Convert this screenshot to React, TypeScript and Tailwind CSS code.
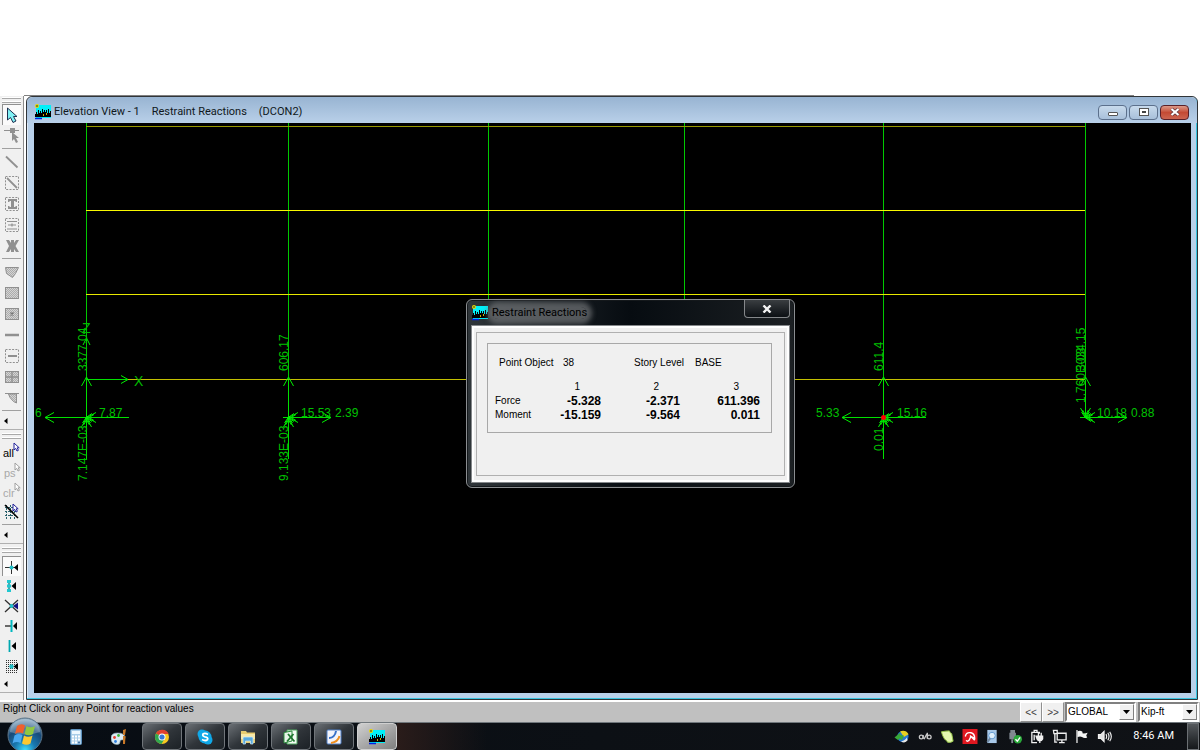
import type { ReactNode } from 'react';

const uiFont = "font-['Liberation_Sans',Arial,sans-serif]";
const titleFont = "font-['Roboto','Open_Sans',sans-serif]";

function AppIcon({ className }: { className: string }) {
  return (
    <svg viewBox="0 0 16 16" className={className} aria-hidden="true">
      <rect x="1" y="1" width="15" height="13" fill="#00f0f8" />
      <path d="M0 13V10h1V8h1v2h1V6h1v3h1V7h1v2h1V5h1v3h1V6h1v2h1V6h1v3h1V5h1v4h1V7h1v6z" fill="#000" />
      <path d="M8 10h1v2H8zM11 9h1v2h-1z" fill="#c8b400" />
      <circle cx="2" cy="2" r="2" fill="#e8d800" />
      <circle cx="2" cy="2" r="1" fill="#6a6a30" />
      <path d="M0 14.500h7" stroke="#0020e0" strokeWidth="1.500" />
    </svg>
  );
}

/* ---------- left toolbars ---------- */

type Tool = { name: string; icon: ReactNode; pressed?: boolean };

const gray = '#909090';
const cursor = 'M0 0v7l1.700-1.600L3 8l1.400-.7L3.200 4.800H5.200z';

const drawTools: (Tool | null)[] = [
  {
    name: 'Pointer',
    pressed: true,
    icon: <path d="M3.500 1v12l3-2.500 2.500 5 3-1.500-2.500-4.500H13z" fill="#7ff0f4" stroke="#203050" strokeWidth="1" />,
  },
  {
    name: 'Reshape object',
    icon: (
      <g fill={gray}>
        <path d="M0 2h15v1H0z" />
        <path d="M6 0h5v5H6z" />
        <path d="M8 4v9l2-2 2 4 2-1-2-4h3z" />
      </g>
    ),
  },
  null,
  { name: 'Draw line', icon: <path d="M2 2.500l11.500 11" stroke={gray} strokeWidth="1.800" /> },
  {
    name: 'Draw line in region',
    icon: (
      <g stroke={gray} fill="none">
        <rect x="1.500" y="1.500" width="13" height="13" strokeDasharray="2 1.300" />
        <path d="M3 3l10 10" strokeWidth="1.800" />
      </g>
    ),
  },
  {
    name: 'Create columns',
    icon: (
      <g>
        <rect x="1.500" y="1.500" width="13" height="13" stroke={gray} fill="none" strokeDasharray="2 1.300" />
        <path d="M4 3h9v3h-1l-1-1h-1v6h1l1-1h1v3H4v-3h1l1 1h1V5H6L5 6H4z" fill={gray} />
      </g>
    ),
  },
  {
    name: 'Create secondary beams',
    icon: (
      <g stroke={gray} fill="none">
        <rect x="1.500" y="1.500" width="13" height="13" strokeDasharray="2 1.300" />
        <path d="M3 4.500h10M4 8h8M3 12h10M8 6.500v3" strokeWidth="1.200" />
      </g>
    ),
  },
  {
    name: 'Create braces',
    icon: (
      <path d="M2 2h3l2 3V2h3v3l2-3h3l-3.500 6 3.500 6h-3l-2-3v3H7v-3l-2 3H2l3-6z" fill={gray} />
    ),
  },
  null,
  { name: 'Draw area', icon: <path d="M1.500 3.500h13l-3 6-3 4-6-4z" fill="url(#dots)" stroke={gray} /> },
  { name: 'Draw rectangular area', icon: <rect x="1.500" y="2.500" width="13" height="11" fill="url(#dots)" stroke={gray} /> },
  {
    name: 'Create area at click',
    icon: (
      <g>
        <rect x="1.500" y="2.500" width="13" height="11" fill="url(#dots)" stroke={gray} />
        <path d="M6.500 6.500l3 3M9.500 6.500l-3 3" stroke="#777" strokeWidth="1.400" />
      </g>
    ),
  },
  { name: 'Draw wall', icon: <path d="M1 8h14" stroke={gray} strokeWidth="2.500" /> },
  {
    name: 'Create wall in region',
    icon: (
      <g stroke={gray} fill="none">
        <rect x="1.500" y="1.500" width="13" height="13" strokeDasharray="2 1.300" />
        <path d="M4 8h9" strokeWidth="2" />
      </g>
    ),
  },
  {
    name: 'Draw window',
    icon: (
      <g stroke={gray}>
        <rect x="1.500" y="2.500" width="13" height="11" fill="url(#dots)" />
        <path d="M8 2v12M1 8h14" strokeWidth="1.400" />
      </g>
    ),
  },
  {
    name: 'Draw door',
    icon: (
      <g stroke={gray} fill="url(#dots)">
        <path d="M1 3.500h14" />
        <path d="M4.500 4h8v9l-3-1.500-3.500-4z" />
      </g>
    ),
  },
];

const selectTools: Tool[] = [
  {
    name: 'Select all',
    icon: (
      <g>
        <text x="-1" y="13" fontSize="11" fill="#000">all</text>
        <path transform="translate(10 -1)" d={cursor} fill="#fff" stroke="#20209a" />
      </g>
    ),
  },
  {
    name: 'Restore previous selection',
    icon: (
      <g>
        <text x="0" y="13" fontSize="11" fill="#a8a8a8">ps</text>
        <path transform="translate(11 -1)" d={cursor} fill="#fff" stroke="#a0a0a0" />
      </g>
    ),
  },
  {
    name: 'Clear selection',
    icon: (
      <g>
        <text x="-1" y="13" fontSize="11" fill="#a8a8a8">clr</text>
        <path transform="translate(11 -1)" d={cursor} fill="#fff" stroke="#a0a0a0" />
      </g>
    ),
  },
  {
    name: 'Select by intersecting line',
    icon: (
      <g>
        <path d="M2.500 1v14M6.500 1v14M10.500 1v14M1 3.500h12M1 7.500h12M1 11.500h12" stroke="#28606c" strokeDasharray="2 1" />
        <path d="M1 1l13 13" stroke="#000" strokeWidth="1.600" />
        <path transform="translate(9 0)" d={cursor} fill="#fff" stroke="#20209a" />
      </g>
    ),
  },
];

const snapTools: Tool[] = [
  {
    name: 'Snap to points',
    pressed: true,
    icon: (
      <g>
        <path d="M1 8.500h13M7.500 2v13" stroke="#303030" />
        <circle cx="7.500" cy="8.500" r="2" fill="#20c0c8" />
        <path d="M10 8.500l4-3.500v7z" fill="#000" />
      </g>
    ),
  },
  {
    name: 'Snap to midpoints',
    icon: (
      <g>
        <path d="M5 2v12" stroke="#208890" strokeWidth="1.500" />
        <path d="M3 2h4v3H3zM3 6.500h4v3H3zM3 11h4v3H3z" fill="#20c8d0" />
        <path d="M7.500 8l4.500-4v8z" fill="#000" />
      </g>
    ),
  },
  {
    name: 'Snap to intersections',
    icon: (
      <g>
        <path d="M1 2l13 12M1 14L14 2" stroke="#303030" strokeWidth="1.300" />
        <circle cx="7.500" cy="8" r="2" fill="#20c0c8" />
        <path d="M9 8l5-3.500v7z" fill="#101080" />
      </g>
    ),
  },
  {
    name: 'Snap to perpendicular',
    icon: (
      <g>
        <path d="M1 8h7" stroke="#202020" strokeWidth="1.300" />
        <path d="M7.500 2v12" stroke="#00b8c0" strokeWidth="2" />
        <path d="M9 8l4-4v8z" fill="#000" />
      </g>
    ),
  },
  {
    name: 'Snap to lines and edges',
    icon: (
      <g>
        <path d="M5.500 2v12" stroke="#00a8b0" strokeWidth="1.800" />
        <path d="M7.500 8l4.500-4v8z" fill="#000" />
      </g>
    ),
  },
  {
    name: 'Snap to fine grid',
    icon: (
      <g>
        <rect x="1" y="2" width="13" height="13" fill="url(#grid)" />
        <circle cx="7.500" cy="8.500" r="2.200" fill="#20c0c8" />
        <path d="M9.500 8.500l4.500-3.500v7z" fill="#000" />
      </g>
    ),
  },
];

function Grip({ className }: { className: string }) {
  return (
    <div className={`flex flex-col justify-center gap-0.5 px-0.5 ${className}`}>
      <div className="h-0.5 border-b border-[#a8a8a8] bg-white" />
      <div className="h-0.5 border-b border-[#a8a8a8] bg-white" />
    </div>
  );
}

function ToolButton({ tool, tall }: { tool: Tool; tall?: boolean }) {
  return (
    <button
      type="button"
      aria-label={tool.name}
      className={`flex w-full items-center justify-center ${tall ? 'h-[21px]' : 'h-5'} ${
        tool.pressed ? 'border-l border-t border-[#909090] bg-[#fafafa]' : ''
      }`}
    >
      <svg viewBox="0 0 16 16" className={`h-4 w-4 shrink-0 overflow-visible ${uiFont}`}>
        {tool.icon}
      </svg>
    </button>
  );
}

function Divider() {
  return <div className="my-0.5 h-px shrink-0 bg-[#a0a0a0]" />;
}

function MoreArrow() {
  return (
    <button type="button" aria-label="More tools" className="flex h-4 items-center pl-0.5">
      <svg viewBox="0 0 4 6" className="h-1.5 w-1">
        <path d="M0 3l3.500-3v6z" fill="#000" />
      </svg>
    </button>
  );
}

function Toolbars() {
  return (
    <aside className="flex w-6 shrink-0 flex-col border-r border-[#8c8c8c] bg-[#f0f0f0]">
      <svg className="absolute h-0 w-0" aria-hidden="true">
        <defs>
          <pattern id="dots" width="2" height="2" patternUnits="userSpaceOnUse">
            <rect width="2" height="2" fill="#d4d4d4" />
            <path d="M0 0h1v1H0zM1 1h1v1H1z" fill="#acacac" />
          </pattern>
          <pattern id="grid" width="2" height="2" patternUnits="userSpaceOnUse">
            <path d="M0 0h1v1H0z" fill="#303030" />
          </pattern>
        </defs>
      </svg>
      <Grip className="h-2" />
      <div className="flex flex-col px-0.5">
        {drawTools.map((tool, i) => (tool ? <ToolButton key={i} tool={tool} tall /> : <Divider key={i} />))}
        <Divider />
        <MoreArrow />
      </div>
      <div className="h-px bg-[#b0b0b0]" />
      <Grip className="h-3" />
      <div className="flex flex-col px-0.5">
        {selectTools.map((tool) => (
          <ToolButton key={tool.name} tool={tool} />
        ))}
        <Divider />
        <MoreArrow />
      </div>
      <div className="h-px bg-[#b0b0b0]" />
      <Grip className="h-3" />
      <div className="flex flex-col px-0.5">
        {snapTools.map((tool) => (
          <ToolButton key={tool.name} tool={tool} />
        ))}
        <MoreArrow />
      </div>
      <div className="h-px bg-[#b0b0b0]" />
    </aside>
  );
}

/* ---------- elevation drawing ---------- */

function Head({ x, y, angle, double }: { x: number; y: number; angle: number; double?: boolean }) {
  return (
    <g transform={`translate(${x} ${y}) rotate(${angle})`}>
      <path d="M-9-5L0 0l-9 5" />
      {double && <path d="M-5-4L1 0l-6 4M-7-3l5 3-5 3" />}
    </g>
  );
}

const columns = [86, 288, 488, 684, 883, 1085];
const beams = [
  { y: 126, color: '#989800' },
  { y: 210, color: '#f8f800' },
  { y: 294, color: '#e8e800' },
  { y: 379, color: '#c4c000' },
];

const labels = [
  { text: '6', x: 35 },
  { text: '7.87', x: 99 },
  { text: '15.53', x: 301 },
  { text: '2.39', x: 335 },
  { text: '5.33', x: 816 },
  { text: '15.16', x: 897 },
  { text: '10.18', x: 1097 },
  { text: '0.88', x: 1131 },
];

const uprightLabels = [
  { text: '3377.04', x: 87, y: 371 },
  { text: '7.147E-03', x: 87, y: 481 },
  { text: '606.17', x: 288, y: 371 },
  { text: '9.133E-03', x: 288, y: 481 },
  { text: '611.4', x: 883, y: 371 },
  { text: '0.01', x: 883, y: 451 },
  { text: '3034.15', x: 1085, y: 371 },
  { text: '1.760E-03', x: 1085, y: 403 },
];

function Elevation() {
  return (
    <svg className={`block h-full w-full ${uiFont}`} role="img" aria-label="Frame elevation with restraint reactions">
      <g transform="translate(-34 -123)">
        {columns.map((x) => (
          <path key={x} d={`M${x}.500 123V379`} stroke="#00c800" />
        ))}
        {beams.map((b) => (
          <path key={b.y} d={`M86 ${b.y}.500H1085`} stroke={b.color} />
        ))}
        <g stroke="#00e000" fill="none">
          <path d="M86.500 379.500V459M288.500 379.500V459M883.500 379.500V459M1085.500 379.500V417" />
          <path d="M45 417.500H129M283 417.500H331M842 417.500H926M1080 417.500H1127M86 379.500H128" />
        </g>
        <g stroke="#00f000" fill="none">
          {[86.5, 288.5, 883.5, 1085.5].map((x) => (
            <Head key={x} x={x} y={377} angle={-90} />
          ))}
          {[86.5, 288.5, 883.5].map((x) => (
            <Head key={x} x={x} y={418} angle={-90} double />
          ))}
          <Head x={1085.5} y={417} angle={90} double />
          {[87, 289, 884, 1086].map((x) => (
            <Head key={x} x={x} y={417.5} angle={180} double />
          ))}
          <Head x={45} y={417.5} angle={180} />
          <Head x={842} y={417.5} angle={180} />
          <Head x={331} y={417.5} angle={0} />
          <Head x={1127} y={417.5} angle={0} />
          <path d="M121 375.500l7 4-7 4M83 345l3.500-7 3.500 7" />
        </g>
        <circle cx="883.500" cy="417.500" r="2.500" fill="#ff0000" />
        <g fill="#00c000" fontSize="12">
          {labels.map((l) => (
            <text key={l.text} x={l.x} y="417">
              {l.text}
            </text>
          ))}
          {uprightLabels.map((l) => (
            <text key={l.text} transform={`translate(${l.x} ${l.y}) rotate(-90)`}>
              {l.text}
            </text>
          ))}
        </g>
        <g fill="#00b800" fontSize="14">
          <text x="134" y="386">X</text>
          <text x="82" y="333">Z</text>
        </g>
      </g>
    </svg>
  );
}

const reactions = [
  { name: 'Force', values: ['-5.328', '-2.371', '611.396'] },
  { name: 'Moment', values: ['-15.159', '-9.564', '0.011'] },
];

function ReactionDialog() {
  return (
    <div
      role="dialog"
      aria-label="Restraint Reactions"
      className="absolute left-[432px] top-[176px] flex w-[329px] flex-col rounded-md border border-[#8a8d90] bg-gradient-to-r from-[#30363a] via-[#070c11] to-[#1c2023] px-1 pb-1 shadow-[inset_0_0_0_1px_#14181b]"
    >
      <div className="flex h-[25px] items-start justify-between">
        <div className={`flex h-full items-center gap-1 pl-px text-[11px] text-black ${titleFont}`}>
          <AppIcon className="h-4 w-4" />
          <h2 className="rounded-full bg-[#707376]/70 leading-3 shadow-[0_0_5px_5px_rgba(112,115,118,0.7)]">Restraint Reactions</h2>
        </div>
        <button
          type="button"
          aria-label="Close"
          className="flex h-[18px] w-[46px] items-center justify-center rounded-b border border-t-0 border-[#85888b] bg-gradient-to-b from-[#3a3e41] to-[#0c1014]"
        >
          <svg viewBox="0 0 10 8" className="h-2 w-2.5">
            <path d="M1.500.5l7 7M8.500.5l-7 7" stroke="#f4f4f4" strokeWidth="2.400" />
          </svg>
        </button>
      </div>
      <div className={`border border-[#85888b] bg-white text-[10px] leading-[14px] text-black ${uiFont}`}>
        <div className="border-2 border-white bg-[#f0f0f0] px-0.5 py-1">
          <div className="h-36 border border-[#b0b0b0] pl-[10px] pr-3 pt-[10px]">
            <div className="h-[90px] border border-[#a8a8a8] pl-[7px] pt-3">
              <dl className="flex whitespace-nowrap pl-1">
                <dt className="w-16">Point Object</dt>
                <dd className="w-[71px]">38</dd>
                <dt className="w-[61px]">Story Level</dt>
                <dd>BASE</dd>
              </dl>
              <table className="mt-[10px] w-[265px] table-fixed border-collapse">
                <thead>
                  <tr>
                    <td className="w-10 p-0" />
                    <th scope="col" className="w-[66px] p-0 pr-[21px] text-right font-normal">1</th>
                    <th scope="col" className="w-[79px] p-0 pr-[21px] text-right font-normal">2</th>
                    <th scope="col" className="w-20 p-0 pr-[21px] text-right font-normal">3</th>
                  </tr>
                </thead>
                <tbody>
                  {reactions.map((r) => (
                    <tr key={r.name}>
                      <th scope="row" className="p-0 text-left font-normal">
                        {r.name}
                      </th>
                      {r.values.map((v) => (
                        <td key={v} className="p-0 text-right text-xs leading-[14px] font-bold">
                          {v}
                        </td>
                      ))}
                    </tr>
                  ))}
                </tbody>
              </table>
            </div>
          </div>
        </div>
      </div>
    </div>
  );
}

function ElevationWindow() {
  const control = 'flex h-[15px] w-[29px] items-center justify-center rounded-sm border';
  return (
    <main className="mx-0.5 flex min-w-0 flex-1 flex-col rounded-t-md border border-[#303438] bg-[#b9d1ea] shadow-[inset_-1px_-1px_0_#38c4e0,inset_1px_1px_0_#dce8f4]">
      <header className="flex h-[26px] shrink-0 items-center rounded-t-md bg-gradient-to-b from-[#98b4d2] to-[#b9d0e9] pl-2 pr-2 pt-1">
        <AppIcon className="mr-[3px] h-4 w-4" />
        <h1 className={`flex flex-1 gap-3 text-[11px] text-[#101820] ${titleFont}`}>
          <span>Elevation View - 1</span>
          <span>Restraint Reactions</span>
          <span>(DCON2)</span>
        </h1>
        <div className="flex gap-0.5">
          <button type="button" aria-label="Minimize" className={`${control} border-[#5c708c] bg-gradient-to-b from-[#c8daec] to-[#a8c0da]`}>
            <span className="mt-1 h-1 w-2.5 rounded-[1px] border border-[#555] bg-white" />
          </button>
          <button type="button" aria-label="Maximize" className={`${control} border-[#5c708c] bg-gradient-to-b from-[#c8daec] to-[#a8c0da]`}>
            <span className="flex h-2 w-2.5 items-center justify-center border border-[#555] bg-white">
              <span className="h-0.5 w-1 bg-[#444]" />
            </span>
          </button>
          <button type="button" aria-label="Close window" className={`${control} border-[#5a2028] bg-gradient-to-b from-[#dc9888] via-[#c44a34] to-[#cc6450]`}>
            <svg viewBox="0 0 12 10" className="h-2.5 w-3">
              <path d="M2.500 2l7 6M9.500 2l-7 6" stroke="#5a3038" strokeWidth="3.600" />
              <path d="M2.500 2l7 6M9.500 2l-7 6" stroke="#fff" strokeWidth="2.200" />
            </svg>
          </button>
        </div>
      </header>
      <div className="relative mb-1.5 ml-[7px] mr-1.5 min-h-[570px] flex-1 overflow-hidden bg-black">
        <div className="absolute inset-0">
          <Elevation />
        </div>
        <ReactionDialog />
      </div>
    </main>
  );
}

/* ---------- status bar ---------- */

function UnitSelect({ label, options, className }: { label: string; options: string[]; className: string }) {
  return (
    <div className={`relative border-2 border-[#808080] border-b-white border-r-white bg-white ${className}`}>
      <select aria-label={label} className="block h-full w-full appearance-none pl-px text-[10px] leading-4 text-black">
        {options.map((o) => (
          <option key={o}>{o}</option>
        ))}
      </select>
      <span className="pointer-events-none absolute inset-y-0 right-0 flex w-[15px] items-center justify-center border border-white border-b-[#808080] border-r-[#808080] bg-[#f0f0f0]">
        <svg viewBox="0 0 7 4" className="h-1 w-[7px]">
          <path d="M0 0h7L3.500 4z" fill="#000" />
        </svg>
      </span>
    </div>
  );
}

function StatusBar() {
  const nav = 'flex items-center justify-center border border-white border-b-[#909090] border-r-[#909090] bg-[#f0f0f0] text-[#404040]';
  return (
    <footer className={`flex h-[22px] shrink-0 border-t-2 border-white bg-[#c0c0c0] text-[10px] text-black ${uiFont}`}>
      <p className="flex-1 pl-[3px] leading-[14px]">Right Click on any Point for reaction values</p>
      <button type="button" className={`${nav} w-[22px]`}>&lt;&lt;</button>
      <button type="button" className={`${nav} w-[22px]`}>&gt;&gt;</button>
      <UnitSelect label="Coordinate system" options={['GLOBAL']} className="ml-px w-[71px]" />
      <UnitSelect label="Units" options={['Kip-ft']} className="ml-0.5 mr-px w-[61px]" />
    </footer>
  );
}

/* ---------- taskbar ---------- */

function StartOrb() {
  return (
    <svg viewBox="0 0 36 36" className="h-9 w-9">
      <defs>
        <radialGradient id="orb" cx="50%" cy="95%" r="90%">
          <stop offset="0" stopColor="#40e0ff" />
          <stop offset="0.35" stopColor="#1878b0" />
          <stop offset="0.7" stopColor="#184a78" />
          <stop offset="1" stopColor="#88a8c0" />
        </radialGradient>
      </defs>
      <circle cx="18" cy="18" r="17" fill="url(#orb)" stroke="#5c7488" />
      <path d="M3 15a15 13 0 0130 0q-15 5-30 0z" fill="#fff" opacity="0.25" />
      <path d="M10 9q4-3 8-.5l-2 8q-4-2-8 .5z" fill="#f0602c" />
      <path d="M19.500 9q4 2.500 8.500 0l-2 8q-4 2.500-8.500 0z" fill="#90c840" />
      <path d="M7.500 18.500q4-2.500 8-.5l-2 8q-4-2-8 .5z" fill="#48a8f0" />
      <path d="M17 18.500q4 2.500 8.500 0l-2 8q-4 2.500-8.500 0z" fill="#fcc830" />
    </svg>
  );
}

const pinned = [
  {
    name: 'Calculator',
    icon: (
      <g>
        <rect x="2.500" y=".5" width="11" height="15" rx="1" fill="#a8cce8" stroke="#5c90bc" />
        <rect x="4" y="2" width="8" height="3" fill="#eef8ff" />
        <path d="M4 7.500h8M4 10.500h8M4 13.500h8" stroke="#fff" strokeWidth="2" strokeDasharray="2 1" />
        <path d="M10 12.500h2v2h-2z" fill="#4878a8" />
      </g>
    ),
  },
  {
    name: 'Paint',
    icon: (
      <g>
        <path d="M0 9q0-5 6.500-5Q14 4 14 9q0 2-4 2-1 0-1 2 0 2.500-3 2.500Q0 15 0 9z" fill="#dcecf4" stroke="#88a8b8" strokeWidth=".7" />
        <circle cx="3.500" cy="8.500" r="1.400" fill="#e84030" />
        <circle cx="7.500" cy="6.500" r="1.400" fill="#40b840" />
        <circle cx="4.500" cy="12.500" r="1.400" fill="#3080e0" />
        <path d="M12 1l3-1-1 6h-2zM12 7h2.500l-.5 8h-2z" fill="#c87828" />
      </g>
    ),
  },
];

const running = [
  {
    name: 'Google Chrome',
    icon: (
      <g>
        <circle cx="8" cy="8" r="7" fill="#f8c820" />
        <path d="M8 8L2 4.400A7 7 0 0114.600 5H8z" fill="#e04030" />
        <path d="M8 8l-6-3.600A7 7 0 007.500 15l3.500-6z" fill="#30a850" />
        <circle cx="8" cy="8" r="3.500" fill="#fff" />
        <circle cx="8" cy="8" r="2.600" fill="#3878d8" />
      </g>
    ),
  },
  {
    name: 'Skype',
    icon: (
      <g>
        <circle cx="5" cy="5" r="4.500" fill="#10a8e8" />
        <circle cx="11" cy="11" r="4.500" fill="#10a8e8" />
        <circle cx="8" cy="8" r="6.500" fill="#10a8e8" />
        <path d="M11 5.500Q8 3.500 6 5q-1 2 2 2.800 3.500.8 2.500 2.800Q8.500 12.500 5 10.500" fill="none" stroke="#fff" strokeWidth="1.800" />
      </g>
    ),
  },
  {
    name: 'Explorer',
    icon: (
      <g>
        <path d="M1 2h5l1 1.500h8V14H1z" fill="#e8cc70" />
        <path d="M1 5h14v5H1z" fill="#f8e8a8" />
        <path d="M3 15V9q0-1 1-1h8q1 0 1 1v6h-2.500v-3h-5v3z" fill="#58a8dc" stroke="#d0ecfc" strokeWidth=".7" />
      </g>
    ),
  },
  {
    name: 'Excel',
    icon: (
      <g>
        <path d="M4 1h10v14H4z" fill="#f4fcf4" stroke="#50a860" />
        <path d="M1 3.500L9 2v10l-8 2z" fill="#e8f4e8" stroke="#2c8c3c" strokeWidth="1" />
        <path d="M5 5l6.500 7.500M10.500 5L4 12.500" stroke="#207830" strokeWidth="1.800" />
      </g>
    ),
  },
  {
    name: 'Foxit Reader',
    icon: (
      <g>
        <rect x="1" y="1" width="14" height="14" rx="1" fill="#f4f4fa" stroke="#5080c8" />
        <path d="M3 8q5 0 6-6h2Q10 9 3 10z" fill="#3870c8" />
        <path d="M5 14q7-1 8.500-7" fill="none" stroke="#f09020" strokeWidth="2" />
      </g>
    ),
  },
];

const trayIcons = [
  {
    name: 'Download manager',
    icon: (
      <g>
        <circle cx="9" cy="8" r="6" fill="#2878d0" />
        <path d="M6 2.500q6-2 9 3l-5 3z" fill="#e8d020" />
        <path d="M0 9l6-5v2.500l4 .5-2 5-3-2-1 2z" fill="#38a838" />
        <path d="M7 13q5-1 6-4l1 3q-3 4-7 1z" fill="#e8e8e8" />
      </g>
    ),
  },
  {
    name: 'Audio',
    icon: (
      <g fill="none" stroke="#c8c8c8" strokeWidth="1.400">
        <circle cx="4" cy="8.500" r="2" />
        <circle cx="12.500" cy="8.500" r="2" />
        <path d="M6 6.500v4M7 11l3-6M10.500 4v6.500" />
      </g>
    ),
  },
  {
    name: 'Notes',
    icon: <path d="M2 3q5-1 8.500-1 .5 2 2.500 3l1.500 8q-3 2-6 1-.5-2-3-3-2.500-4-3.500-8z" fill="#e4f8b0" stroke="#98c848" />,
  },
  {
    name: 'Antivirus',
    icon: (
      <g>
        <rect x="0" y="0" width="16" height="16" fill="#e01820" />
        <path d="M3 8q1-5 6-4 4 1 4 6l-4-2-2 4q-2 2-3 0M8 7l5 5" fill="none" stroke="#fff" strokeWidth="1.500" />
      </g>
    ),
  },
  {
    name: 'Search',
    icon: (
      <g>
        <path d="M3 1h10v14H3z" fill="#a8c8e8" />
        <circle cx="8" cy="7" r="3.500" fill="#e0f0fc" stroke="#6098d0" />
        <path d="M6 10l-3 4" stroke="#7088a0" strokeWidth="2" />
      </g>
    ),
  },
  {
    name: 'Safely remove hardware',
    icon: (
      <g>
        <path d="M3 1h5v3h1v7H2V4h1z" fill="#808890" />
        <path d="M5 11v4" stroke="#808890" strokeWidth="2" />
        <circle cx="11" cy="11" r="4.500" fill="#28a838" />
        <path d="M8.500 11l2 2 3-4" fill="none" stroke="#fff" strokeWidth="1.500" />
      </g>
    ),
  },
  {
    name: 'Power',
    icon: (
      <g fill="none" stroke="#f0f0f0" strokeWidth="1.400">
        <path d="M8 14.500H2.500v-11h8V5M5 3V1.500h3V3M5 6v6" />
        <path d="M7 7.500h7v3q-1 2-3 2t-3-2zM9.500 7V4M12.500 7V4M11 12v3" fill="#f0f0f0" />
      </g>
    ),
  },
  {
    name: 'Network',
    icon: (
      <g fill="none" stroke="#f0f0f0" strokeWidth="1.400">
        <path d="M5 4.500h9.500v7H5zM7 14.500h6M10 12v2M1 1.500h4V5H1.500zM2.500 5v9H5" />
      </g>
    ),
  },
  { name: 'Action center', icon: <path d="M2 1h1.300v14H2zM3.500 2.500Q6 1 8.500 3v1.500q2 .5 5.500-.5l-1.500 3 1 2q-3 1.500-5.500-.5-2-1-4.500 0z" fill="#f4f4f4" /> },
  {
    name: 'Volume',
    icon: (
      <g fill="none" stroke="#f0f0f0" strokeWidth="1.200">
        <path d="M1 6h2.500L7 2.500v11L3.500 10H1z" fill="#e0e0e0" />
        <path d="M9 5.500q1.500 2.500 0 5M11 4q2.500 4 0 8M13 3q3.500 5 0 10" />
      </g>
    ),
  },
];

function Taskbar() {
  return (
    <nav
      aria-label="Taskbar"
      className="flex h-7 shrink-0 border-t border-[#70777c] bg-gradient-to-r from-[#070c13] via-[#0c1015] to-[#101216]"
    >
      <button type="button" aria-label="Start" className="relative ml-[7px] -mt-1.5 h-9 w-9 shrink-0">
        <StartOrb />
      </button>
      <div className="ml-[11px] flex">
        {pinned.map((app) => (
          <button key={app.name} type="button" aria-label={app.name} className="flex w-[43px] items-center justify-center">
            <svg viewBox="0 0 16 16" className="h-4 w-4">{app.icon}</svg>
          </button>
        ))}
      </div>
      <div className="ml-0.5 flex gap-[3px]">
        {running.map((app) => (
          <button
            key={app.name}
            type="button"
            aria-label={app.name}
            className="flex w-10 items-center justify-center rounded-sm border border-[#70757a] bg-gradient-to-br from-[#6b7075] via-[#30353a] to-[#1c2126]"
          >
            <svg viewBox="0 0 16 16" className="h-4 w-4">{app.icon}</svg>
          </button>
        ))}
        <button
          type="button"
          aria-label="Elevation View"
          className="flex w-10 items-center justify-center rounded-sm border border-[#d0d0d0] bg-gradient-to-br from-[#d0d0d0] via-[#a8a8a8] to-[#808080]"
        >
          <AppIcon className="h-4 w-4" />
        </button>
      </div>
      <div className="h-full w-[90px] bg-gradient-to-r from-[#2a1c1a] to-transparent" />
      <div className="ml-auto flex w-[219px] items-center justify-between">
        {trayIcons.map((t) => (
          <button key={t.name} type="button" aria-label={t.name}>
            <svg viewBox="0 0 16 16" className="h-[15px] w-4">{t.icon}</svg>
          </button>
        ))}
      </div>
      <time className={`flex w-[74px] items-center justify-end pr-[13px] text-[11px] text-white ${titleFont}`}>8:46 AM</time>
      <button
        type="button"
        aria-label="Show desktop"
        className="mr-px w-3 border border-[#6c7074] bg-gradient-to-b from-[#54585c] to-[#15181b]"
      />
    </nav>
  );
}

export default function App() {
  return (
    <div className="flex min-h-screen flex-col overflow-hidden bg-white">
      <div className="h-[95px] shrink-0" />
      <div className="ml-6 mr-[66px] h-px shrink-0 bg-[#808080]" />
      <div className="flex flex-1">
        <Toolbars />
        <ElevationWindow />
      </div>
      <StatusBar />
      <Taskbar />
    </div>
  );
}
